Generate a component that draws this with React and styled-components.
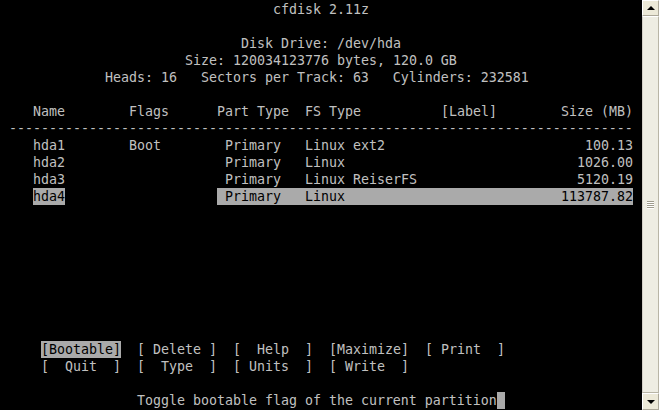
import React from "react";
import styled, { createGlobalStyle } from "styled-components";

const CHAR = 8;
const LINE = 17;

const GlobalStyle = createGlobalStyle`
  html, body {
    margin: 0;
    padding: 0;
    background: #000;
  }
`;

const Window = styled.div`
  display: flex;
  width: 659px;
  height: 410px;
  overflow: hidden;
  background: #000;
`;

const Terminal = styled.div`
  flex: 1;
  padding: 1px 0 0 1px;
  font-family: "DejaVu Sans Mono", "Liberation Mono", monospace;
  font-size: 13.29px;
  color: #c0c0c0;
`;

const Line = styled.div`
  display: flex;
  height: ${LINE}px;
  line-height: ${LINE}px;
  white-space: pre;
`;

const Cell = styled.span`
  display: inline-block;
  flex: none;
  width: ${(p) => p.$cols * CHAR}px;
  padding-left: ${(p) => (p.$pad || 0) * CHAR}px;
  box-sizing: border-box;
  text-align: ${(p) => (p.$right ? "right" : "left")};
  overflow: hidden;
`;

const Hl = styled.span`
  display: inline-flex;
  height: ${LINE}px;
  background: ${(p) => (p.$on ? "#aaaaaa" : "transparent")};
  color: ${(p) => (p.$on ? "#000" : "inherit")};
`;

const Cursor = styled.span`
  display: inline-block;
  width: ${CHAR}px;
  height: ${LINE}px;
  background: #aaaaaa;
`;

const Scrollbar = styled.div`
  width: 17px;
  flex: none;
  display: flex;
  flex-direction: column;
  background: #ece9d8;
`;

const ArrowButton = styled.div`
  height: ${(p) => p.$h}px;
  box-sizing: border-box;
  border: 1px solid #fff;
  border-right-color: #aca899;
  border-bottom-color: #aca899;
  background: #ece9d8;
  display: flex;
  align-items: center;
  justify-content: center;
`;

const Thumb = styled.div`
  flex: 1;
  box-sizing: border-box;
  border: 1px solid #fff;
  border-right-color: #b8b5a6;
  border-bottom-color: #b8b5a6;
  border-left-color: #d4d0c8;
  background: #eeede3;
  display: flex;
  flex-direction: column;
  align-items: center;
  justify-content: center;
  gap: 1px;
`;

const Grip = styled.div`
  width: 7px;
  height: 1px;
  background: #9f9c8d;
  box-shadow: 0 1px 0 #fff;
`;

const Triangle = styled.div`
  width: 0;
  height: 0;
  border-left: 4px solid transparent;
  border-right: 4px solid transparent;
  ${(p) =>
    p.$down
      ? "border-top: 4px solid #000;"
      : "border-bottom: 4px solid #000;"}
`;

const partitions = [
  { name: "hda1", flags: "Boot", type: "Primary", fs: "Linux ext2", size: "100.13" },
  { name: "hda2", flags: "", type: "Primary", fs: "Linux", size: "1026.00" },
  { name: "hda3", flags: "", type: "Primary", fs: "Linux ReiserFS", size: "5120.19" },
  { name: "hda4", flags: "", type: "Primary", fs: "Linux", size: "113787.82", current: true },
];

const menuRows = [
  [
    { label: "[Bootable]", active: true },
    { label: "[ Delete ]" },
    { label: "[  Help  ]" },
    { label: "[Maximize]" },
    { label: "[ Print  ]" },
  ],
  [
    { label: "[  Quit  ]" },
    { label: "[  Type  ]" },
    { label: "[ Units  ]" },
    { label: "[ Write  ]" },
  ],
];

function Centered({ text }) {
  const left = Math.floor((80 - text.length) / 2);
  return (
    <Line>
      <Cell $cols={left} />
      {text}
    </Line>
  );
}

function PartitionRow({ p }) {
  return (
    <Line>
      <Cell $cols={4} />
      <Cell $cols={12}>
        <Hl $on={p.current}>{p.name}</Hl>
      </Cell>
      <Cell $cols={11}>{p.flags}</Cell>
      <Hl $on={p.current}>
        <Cell $cols={11} $pad={1}>
          {p.type}
        </Cell>
        <Cell $cols={17}>{p.fs}</Cell>
        <Cell $cols={24} $right>
          {p.size}
        </Cell>
      </Hl>
    </Line>
  );
}

export default function App() {
  return (
    <>
      <GlobalStyle />
      <Window>
        <Terminal>
          <Centered text="cfdisk 2.11z" />
          <Line />
          <Centered text="Disk Drive: /dev/hda" />
          <Centered text="Size: 120034123776 bytes, 120.0 GB" />
          <Centered text="Heads: 16   Sectors per Track: 63   Cylinders: 232581" />
          <Line />
          <Line>
            <Cell $cols={4} />
            <Cell $cols={12}>Name</Cell>
            <Cell $cols={11}>Flags</Cell>
            <Cell $cols={11}>Part Type</Cell>
            <Cell $cols={17}>FS Type</Cell>
            <Cell $cols={15}>[Label]</Cell>
            <Cell $cols={9}>Size (MB)</Cell>
          </Line>
          <Line>
            <Cell $cols={1} />
            {"-".repeat(78)}
          </Line>
          {partitions.map((p) => (
            <PartitionRow key={p.name} p={p} />
          ))}
          {Array.from({ length: 8 }).map((_, i) => (
            <Line key={i} />
          ))}
          {menuRows.map((row, i) => (
            <Line key={i}>
              <Cell $cols={5} />
              {row.map((b) => (
                <Cell key={b.label} $cols={12}>
                  <Hl $on={b.active}>{b.label}</Hl>
                </Cell>
              ))}
            </Line>
          ))}
          <Line />
          <Line>
            <Cell $cols={17} />
            Toggle bootable flag of the current partition
            <Cursor />
          </Line>
        </Terminal>
        <Scrollbar>
          <ArrowButton $h={16}>
            <Triangle />
          </ArrowButton>
          <Thumb>
            <Grip />
            <Grip />
            <Grip />
            <Grip />
          </Thumb>
          <ArrowButton $h={17}>
            <Triangle $down />
          </ArrowButton>
        </Scrollbar>
      </Window>
    </>
  );
}
